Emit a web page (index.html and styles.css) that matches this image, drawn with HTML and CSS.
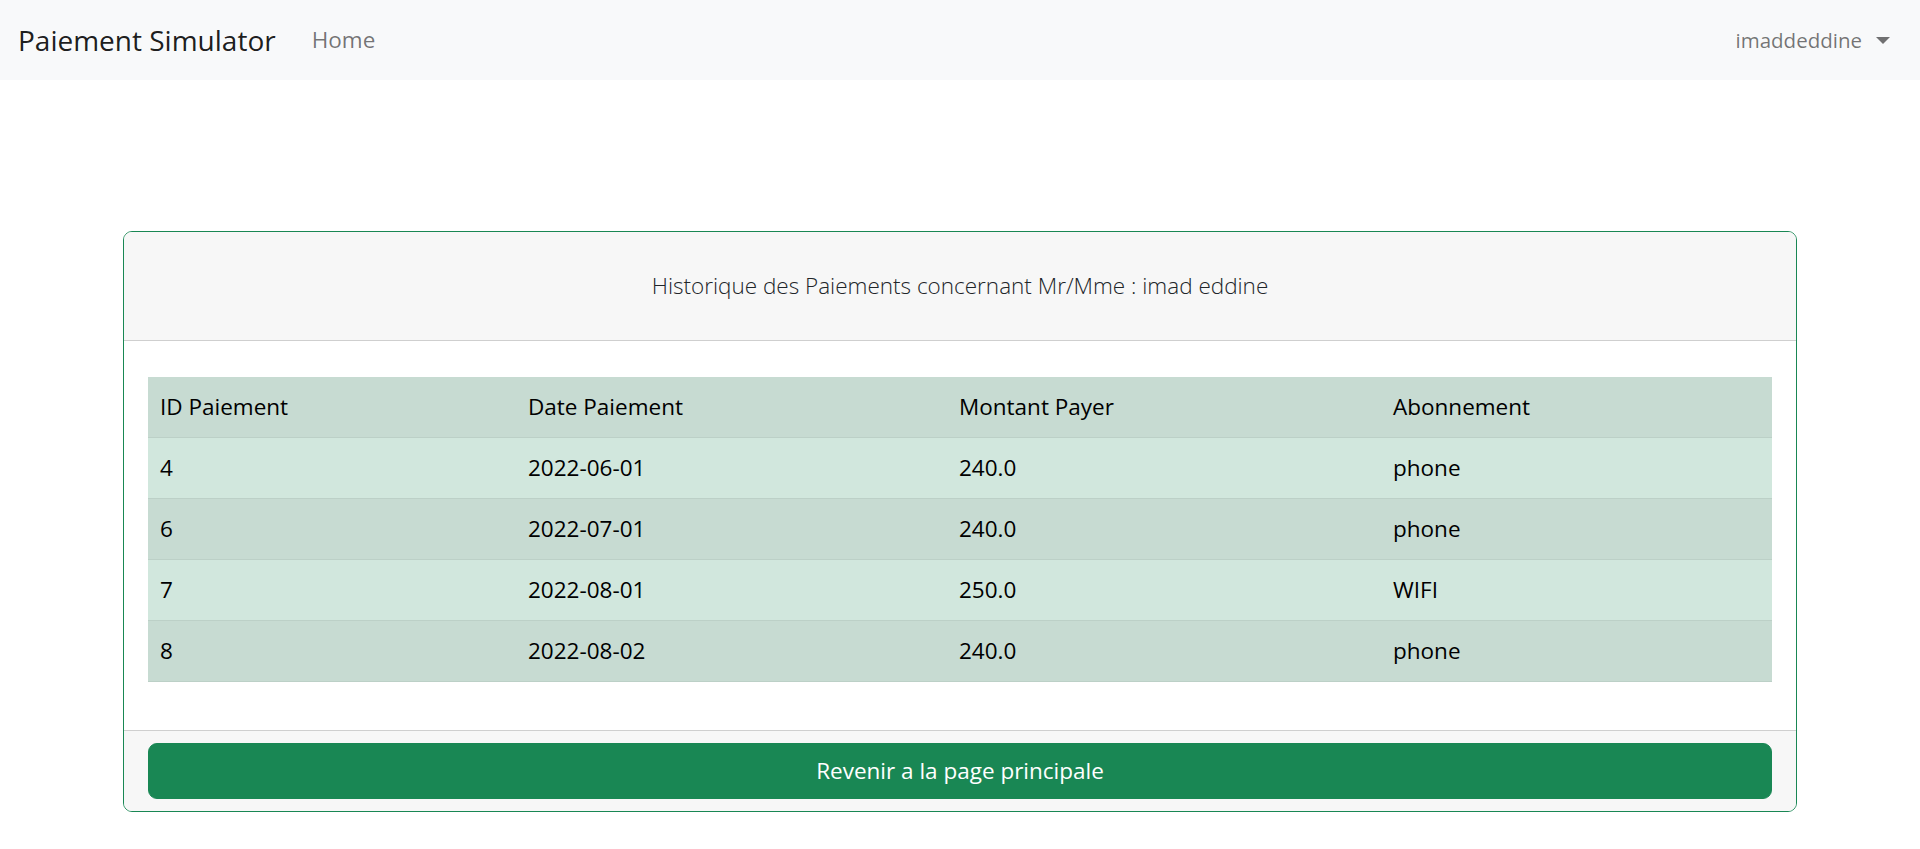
FILE: index.html
```html
<!DOCTYPE html>
<html lang="fr">
<head>
<meta charset="utf-8">
<title>Historique des Paiements</title>
<link rel="stylesheet" href="styles.css">
</head>
<body>
<nav class="navbar">
  <div class="nav-left">
    <a class="brand" href="#">Paiement Simulator</a>
    <a class="nav-link" href="#">Home</a>
  </div>
  <a class="nav-link user" href="#">imaddeddine<span class="caret"></span></a>
</nav>
<main class="page">
  <section class="card">
    <header class="card-header">
      <p class="lead">Historique des Paiements concernant Mr/Mme : imad eddine</p>
    </header>
    <div class="card-body">
      <table class="pay-table">
        <colgroup>
          <col class="c1"><col class="c2"><col class="c3"><col class="c4">
        </colgroup>
        <tbody>
          <tr><td>ID Paiement</td><td>Date Paiement</td><td>Montant Payer</td><td>Abonnement</td></tr>
          <tr><td>4</td><td>2022-06-01</td><td>240.0</td><td>phone</td></tr>
          <tr><td>6</td><td>2022-07-01</td><td>240.0</td><td>phone</td></tr>
          <tr><td>7</td><td>2022-08-01</td><td>250.0</td><td>WIFI</td></tr>
          <tr><td>8</td><td>2022-08-02</td><td>240.0</td><td>phone</td></tr>
        </tbody>
      </table>
    </div>
    <footer class="card-footer">
      <a class="btn" href="#">Revenir a la page principale</a>
    </footer>
  </section>
</main>
</body>
</html>
```

FILE: styles.css
```css
* { box-sizing: border-box; }

html, body {
  margin: 0;
  padding: 0;
  background: #fff;
}

body {
  font-family: "Segoe UI", "Open Sans", "Noto Sans", sans-serif;
  font-size: 22.5px;
  line-height: 36px;
  color: #212529;
}

a { text-decoration: none; }

.navbar {
  height: 80px;
  background: #f8f9fa;
  padding: 0 18px;
  display: flex;
  align-items: center;
  justify-content: space-between;
}

.nav-left {
  display: flex;
  align-items: center;
}

.brand {
  font-size: 28px;
  line-height: 45px;
  color: rgba(0, 0, 0, 0.9);
  margin-right: 24px;
}

.nav-link {
  padding: 0 12px;
  color: rgba(0, 0, 0, 0.55);
  font-size: 22.5px;
}

.user {
  display: flex;
  align-items: center;
  font-size: 20.5px;
}

.caret {
  display: inline-block;
  margin-left: 14px;
  width: 14px;
  height: 7px;
  border-top: 7px solid rgba(0, 0, 0, 0.55);
  border-left: 7px solid transparent;
  border-right: 7px solid transparent;
}

.page {
  padding: 151px 123px 0;
}

.card {
  border: 1px solid #198754;
  border-radius: 9px;
  overflow: hidden;
  background: #fff;
}

.card-header {
  height: 109px;
  background: #f7f7f7;
  border-bottom: 1px solid #cfcfcf;
  display: flex;
  align-items: center;
  justify-content: center;
  padding: 0 24px;
}

.lead {
  margin: 0;
  font-size: 22.5px;
  font-weight: 300;
  color: #212529;
}

.card-body {
  padding: 36px 24px 48px;
}

.pay-table {
  width: 100%;
  border-collapse: separate;
  border-spacing: 0;
  table-layout: fixed;
}

.c1 { width: 368px; }
.c2 { width: 431px; }
.c3 { width: 434px; }
.c4 { width: 391px; }

.pay-table td {
  padding: 12px;
  line-height: 36px;
  color: #000;
  border-bottom: 1px solid #bcd0c7;
  background: #d1e7dd;
}

.pay-table tr:nth-child(odd) td {
  background: #c7dbd2;
}

.card-footer {
  background: #f7f7f7;
  border-top: 1px solid #cfcfcf;
  padding: 12px 24px;
}

.btn {
  display: block;
  text-align: center;
  background: #198754;
  border: 1px solid #198754;
  border-radius: 9px;
  color: #fff;
  padding: 9px 18px;
  line-height: 36px;
  font-size: 22.5px;
}
```
